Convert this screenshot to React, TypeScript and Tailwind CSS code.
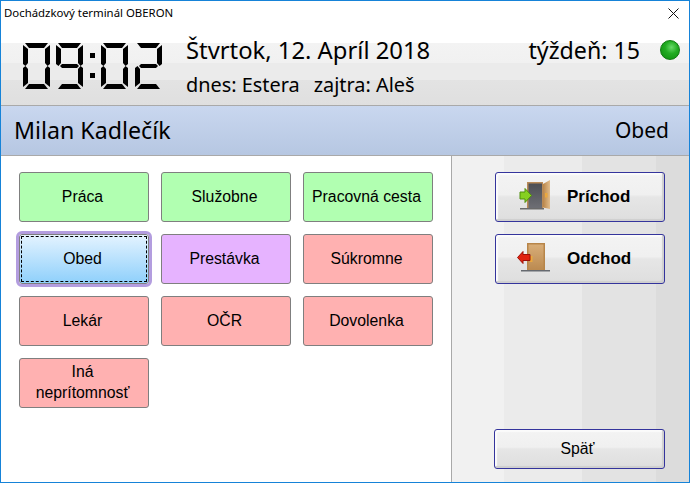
const SEGMENTS: Record<string, string> = {
  a: '2,0 25,0 21,5 6,5',
  b: '27,2 27,21 24.5,23 22,20 22,6',
  c: '27,25 27,44 22,40 22,26 24.5,23',
  d: '2,46 25,46 21,41 6,41',
  e: '0,25 2.5,23 5,26 5,40 0,44',
  f: '0,2 5,6 5,20 2.5,23 0,21',
  g: '6,21 21,21 23,23 21,25 6,25 4,23',
};

const DIGITS: Record<string, string> = {
  '0': 'abcdef',
  '2': 'abdeg',
  '9': 'abcdfg',
};

const Clock = ({ time }: { time: string }) => {
  const xs = [0, 33, 78, 112];
  return (
    <svg width="140" height="47" viewBox="0 0 140 47" className="shrink-0">
      {time.split('').map((d, i) => (
        <g key={i} transform={`translate(${xs[i]} 0)`}>
          {DIGITS[d].split('').map((s) => (
            <polygon key={s} points={SEGMENTS[s]} fill="#000" />
          ))}
        </g>
      ))}
      <rect x="67" y="10" width="5" height="5" fill="#000" />
      <rect x="67" y="30" width="5" height="5" fill="#000" />
    </svg>
  );
};

const DoorIn = () => (
  <svg width="32" height="32" viewBox="0 0 32 32" className="shrink-0 -mt-[4px]">
    <defs>
      <linearGradient id="inside" x1="0" y1="0" x2="0" y2="1">
        <stop offset="0" stopColor="#4c4e54" />
        <stop offset="1" stopColor="#6d6e74" />
      </linearGradient>
      <linearGradient id="leaf" x1="0" y1="0" x2="1" y2="0">
        <stop offset="0" stopColor="#b98549" />
        <stop offset="1" stopColor="#e2bd8c" />
      </linearGradient>
    </defs>
    <rect x="1" y="29" width="24" height="1.5" fill="#6a6a6a" />
    <rect x="8" y="3" width="16" height="26" fill="#b88a58" />
    <rect x="9.5" y="4.5" width="13.5" height="24.5" fill="url(#inside)" />
    <polygon points="24,5 31,1 31,30 24,28.5" fill="url(#leaf)" />
    <rect x="26" y="14" width="2.5" height="4.5" fill="#eaa83e" />
    <polygon points="1,13 6,13 6,9.5 12.5,16.5 6,23.5 6,20 1,20" fill="#86d021" stroke="#4f8f0c" strokeWidth="1" />
  </svg>
);

const DoorOut = () => (
  <svg width="34" height="32" viewBox="0 0 34 32" className="shrink-0 -mt-[4px]">
    <defs>
      <linearGradient id="wood" x1="0" y1="0" x2="0" y2="1">
        <stop offset="0" stopColor="#d8ad78" />
        <stop offset="1" stopColor="#bb8a50" />
      </linearGradient>
    </defs>
    <rect x="4" y="29" width="29" height="1.5" fill="#666a70" />
    <rect x="10" y="2" width="18" height="27" fill="#b78549" />
    <rect x="11.5" y="3.5" width="15" height="25.5" fill="url(#wood)" />
    <rect x="13" y="15" width="2.5" height="6" fill="#eaa83e" />
    <polygon points="0.5,16.5 6,10.5 6,13.5 13,13.5 13,19.5 6,19.5 6,22.5" fill="#e0220f" stroke="#9c1208" strokeWidth="1" />
  </svg>
);

const StatusButton = ({ label, color }: { label: string; color: string }) => (
  <button className={`w-[130px] h-[50px] rounded-[3px] border border-[#7f7f7f] text-[15.8px] leading-[21px] text-black whitespace-pre-line pl-[2px] pr-[5px] pb-[2px] ${color}`}>
    {label}
  </button>
);

const ActionButton = ({ children, className }: { children: React.ReactNode; className: string }) => (
  <button className={`flex items-center rounded-[3px] border border-[#34349c] bg-[linear-gradient(#f3f3f3_0%,#f0f0f0_45%,#e6e6e6_50%,#dedede_100%)] shadow-[inset_-2px_-2px_1px_#cfcfcf,inset_2px_2px_1px_#fbfbfb] ${className}`}>
    {children}
  </button>
);

export default function App() {
  return (
    <div className="w-[690px] h-[483px] flex flex-col overflow-hidden bg-white border border-[#1683d8] font-['Liberation_Sans',sans-serif] text-black">
      <div className="h-[42px] shrink-0 flex items-start justify-between pl-[3px] pr-[10px] pt-[4px]">
        <span className="text-[11.4px] leading-[15px] font-['Noto_Sans',sans-serif]">Dochádzkový terminál OBERON</span>
        <svg width="11" height="11" viewBox="0 0 11 11" className="mt-[3px]">
          <path d="M0.5 0.5 L10.5 10.5 M10.5 0.5 L0.5 10.5" stroke="#111" strokeWidth="1" />
        </svg>
      </div>

      <div className="h-[63px] shrink-0 flex border-b border-[#a9a9a9] bg-[linear-gradient(#f3f3f3_0px,#f1f1f1_20px,#ebebeb_20px,#ebebeb_37px,#e3e3e3_37px,#dfdfdf_62px)] font-['Noto_Sans',sans-serif]">
        <div className="pl-[22px] w-[185px] shrink-0">
          <Clock time="0902" />
        </div>
        <div className="flex-1 flex flex-col">
          <div className="text-[23.8px] leading-[31px] -mt-[8px]">Štvrtok, 12. Apríl 2018</div>
          <div className="text-[19.9px] leading-[26px] mt-[6px] flex gap-[14px]">
            <span>dnes: Estera</span>
            <span>zajtra: Aleš</span>
          </div>
        </div>
        <div className="flex items-start gap-[20px] pr-[9px] -mt-[8px]">
          <span className="text-[23.2px] leading-[31px]">týždeň: 15</span>
          <div className="w-[20px] h-[20px] mt-[5px] rounded-full bg-[radial-gradient(circle_at_58%_35%,#6ada6a_0%,#22ac22_40%,#0b8a0b_100%)] border border-[#0f7a0f]" />
        </div>
      </div>

      <div className="h-[50px] shrink-0 flex items-center justify-between pl-[13px] pr-[20px] border-b border-[#a9a9a9] bg-[linear-gradient(#c9d7ef,#b6c7e2)] font-['Noto_Sans',sans-serif]">
        <span className="text-[23.2px] leading-[31px]">Milan Kadlečík</span>
        <span className="text-[21px] leading-[27px]">Obed</span>
      </div>

      <div className="flex-1 flex min-h-0">
        <div className="w-[450px] shrink-0 pl-[18px] pt-[16px]">
          <div className="grid grid-cols-[130px_130px_130px] auto-rows-[50px] gap-x-[12px] gap-y-[12px]">
            <StatusButton label="Práca" color="bg-[#b1ffb1]" />
            <StatusButton label="Služobne" color="bg-[#b1ffb1]" />
            <StatusButton label="Pracovná cesta" color="bg-[#b1ffb1]" />
            <button className="relative w-[130px] h-[50px] rounded-[3px] border border-[#7f7f7f] outline-[3px] outline-[#b39ddf] text-[15.8px] pr-[3px] bg-[linear-gradient(#e4f3ff,#8fd0fb)]">
              Obed
              <span className="absolute inset-[1px] border border-dashed border-black" />
            </button>
            <StatusButton label="Prestávka" color="bg-[#e6b3ff]" />
            <StatusButton label="Súkromne" color="bg-[#ffb1b1]" />
            <StatusButton label="Lekár" color="bg-[#ffb1b1]" />
            <StatusButton label="OČR" color="bg-[#ffb1b1]" />
            <StatusButton label="Dovolenka" color="bg-[#ffb1b1]" />
            <StatusButton label={'Iná\nneprítomnosť'} color="bg-[#ffb1b1]" />
          </div>
        </div>

        <div className="flex-1 flex flex-col border-l border-[#a9a9a9] pl-[43px] pt-[16px] pb-[13px] bg-[linear-gradient(90deg,#f1f1f1_0px,#f1f1f1_52px,#ebebeb_52px,#ebebeb_130px,#e3e3e3_130px,#e3e3e3_204px,#dcdcdc_204px)]">
          <ActionButton className="w-[170px] h-[50px] pl-[23px] gap-[16px] font-bold text-[17px]">
            <DoorIn />
            <span>Príchod</span>
          </ActionButton>
          <ActionButton className="w-[170px] h-[50px] mt-[12px] pl-[21px] gap-[16px] font-bold text-[17px]">
            <DoorOut />
            <span>Odchod</span>
          </ActionButton>
          <ActionButton className="w-[171px] h-[40px] -ml-[1px] mt-auto justify-center pr-[4px] text-[15.8px]">
            <span>Späť</span>
          </ActionButton>
        </div>
      </div>
    </div>
  );
}
